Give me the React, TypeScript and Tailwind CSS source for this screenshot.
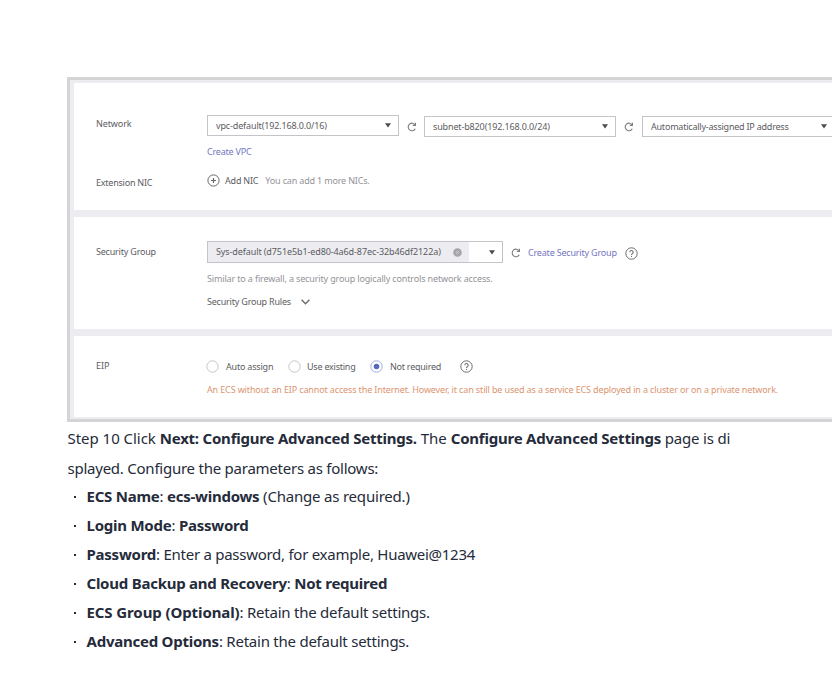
import type { ReactNode } from "react";

const Caret = () => (
  <svg className="h-[5px] w-[6px] shrink-0" viewBox="0 0 6 5">
    <path d="M0 .3h6L3 4.6z" fill="#4b4b50" />
  </svg>
);

const Refresh = () => (
  <svg className="h-[10px] w-[10px] shrink-0" viewBox="0 0 10 10" fill="none" stroke="#7c7c80" strokeWidth="1.1">
    <path d="M8.3 6.8A3.8 3.8 0 1 1 8.2 2.9" />
    <path d="M8.4 0.8V3.4H5.8" />
  </svg>
);

const Help = () => (
  <svg className="h-[13px] w-[13px] shrink-0" viewBox="0 0 13 13" fill="none" stroke="#6c6c70" strokeWidth="1">
    <circle cx="6.5" cy="6.5" r="5.7" />
    <path d="M4.8 5.2a1.7 1.7 0 1 1 2.5 1.5q-.8.4-.8 1.2" strokeWidth="1.1" />
    <path d="M6.5 8.9v1.1" strokeWidth="1.1" />
  </svg>
);

const Radio = ({ checked = false }: { checked?: boolean }) => (
  <svg className="h-[13px] w-[13px] shrink-0" viewBox="0 0 13 13" fill="none">
    <circle cx="6.5" cy="6.5" r="5.7" stroke={checked ? "#9dabe2" : "#c6c6ca"} />
    {checked && <circle cx="6.5" cy="6.5" r="2.8" fill="#5469c0" />}
  </svg>
);

const Select = ({ children, className }: { children: ReactNode; className: string }) => (
  <div className={`flex h-[21px] shrink-0 items-center justify-between border border-[#c3c3c8] pl-2 pr-[7px] ${className}`}>
    <span>{children}</span>
    <Caret />
  </div>
);

const Item = ({ children }: { children: ReactNode }) => (
  <li className="flex h-[29px] items-center">
    <span className="ml-[6px] mr-[11px] h-[2px] w-[2px] bg-[#252b3a]" />
    <span>{children}</span>
  </li>
);

export default function App() {
  return (
    <main className="h-[688px] w-[832px] overflow-hidden bg-white pl-[67px] pt-[77px] font-['Noto_Sans','Open_Sans',sans-serif] text-[#252b3a]">
      <section className="h-[345px] w-[765px] overflow-hidden border-b-[3px] border-l-[3px] border-t-[3px] border-[#d4d4d7] bg-[#ececf1] pl-1 pt-[3px] text-[9px] leading-[14px] tracking-[-0.2px] whitespace-nowrap text-[#5c5c62]">
        <div className="h-[127px] bg-white pl-[22px] pt-[32px]">
          <div className="flex">
            <span className="mt-[2px] w-[111px] shrink-0 tracking-[-0.1px]">Network</span>
            <div className="flex items-center">
              <Select className="mb-px w-[192px] tracking-[-0.14px]">vpc-default(192.168.0.0/16)</Select>
              <span className="ml-[8px] mr-[7px] mt-[2px]"><Refresh /></span>
              <Select className="mt-px w-[192px] tracking-[-0.14px]">subnet-b820(192.168.0.0/24)</Select>
              <span className="ml-[8px] mr-[8px] mt-px"><Refresh /></span>
              <Select className="mt-px w-[193px] tracking-[-0.22px]">Automatically-assigned IP address</Select>
            </div>
          </div>
          <div className="ml-[111px] mt-[8px] text-[#7476c2]">Create VPC</div>
          <div className="mt-[14px] flex">
            <span className="mt-[3px] w-[111px] tracking-[-0.23px]">Extension NIC</span>
            <svg className="mt-px h-[13px] w-[13px]" viewBox="0 0 13 13" fill="none" stroke="#68686c">
              <circle cx="6.5" cy="6.5" r="5.6" />
              <path d="M4 6.5h5M6.5 4v5" strokeWidth="1.2" />
            </svg>
            <span className="ml-[5px] mt-px">Add NIC</span>
            <span className="ml-[7px] mt-px tracking-[-0.17px] text-[#939397]">You can add 1 more NICs.</span>
          </div>
        </div>
        <div className="mt-[7px] h-[112px] bg-white pl-[22px] pt-[24px]">
          <div className="flex items-center">
            <span className="w-[111px]">Security Group</span>
            <div className="flex h-[22px] w-[296px] items-center justify-between border border-[#c3c3c8] pr-[7px]">
              <div className="flex h-5 w-[261px] items-center justify-between bg-[#ececf1] pl-2 pr-[7px]">
                <span className="tracking-[-0.1px]">Sys-default (d751e5b1-ed80-4a6d-87ec-32b46df2122a)</span>
                <svg className="h-[9px] w-[9px]" viewBox="0 0 9 9">
                  <circle cx="4.5" cy="4.5" r="4.3" fill="#a5a5aa" />
                  <path d="M3 3l3 3M6 3L3 6" stroke="#d4d4d7" strokeWidth=".8" />
                </svg>
              </div>
              <Caret />
            </div>
            <span className="ml-[8px] mt-[2px]"><Refresh /></span>
            <span className="ml-[7px] mt-px tracking-[-0.19px] text-[#7476c2]">Create Security Group</span>
            <span className="ml-2 mt-[2px]"><Help /></span>
          </div>
          <div className="ml-[111px] mt-[9px] tracking-[-0.145px] text-[#939397]">Similar to a firewall, a security group logically controls network access.</div>
          <div className="ml-[111px] mt-[9px] flex items-center">
            <span>Security Group Rules</span>
            <svg className="ml-[10px] h-[6px] w-[9px]" viewBox="0 0 9 6" fill="none" stroke="#68686c" strokeWidth="1.3">
              <path d="M.6.7l3.9 4L8.4.7" />
            </svg>
          </div>
        </div>
        <div className="mt-[7px] h-[81px] bg-white pl-[22px] pt-[23px]">
          <div className="flex">
            <span className="w-[110px] tracking-normal">EIP</span>
            <div className="flex h-[15px] items-center">
              <div className="flex w-[82px] items-center gap-[7px]"><Radio />Auto assign</div>
              <div className="flex w-[82px] items-center gap-[6px] tracking-[-0.23px]"><Radio />Use existing</div>
              <div className="flex w-[90px] items-center gap-[7px] tracking-[-0.25px]"><Radio checked />Not required</div>
              <Help />
            </div>
          </div>
          <div className="ml-[111px] mt-[9px] tracking-[-0.135px] text-[#dc9470]">An ECS without an EIP cannot access the Internet. However, it can still be used as a service ECS deployed in a cluster or on a private network.</div>
        </div>
      </section>
      <article className="pl-[0.5px] text-[15px] tracking-[-0.24px]">
        <p className="mt-px leading-[30px]">
          <span className="tracking-[-0.03px]">Step 10 Click </span>
          <b className="tracking-[-0.22px]">Next: Configure Advanced Settings.</b>
          <span className="tracking-normal"> The </span>
          <b className="tracking-[-0.22px]">Configure Advanced Settings</b>
          <span className="tracking-[-0.18px]"> page is di</span>
          <br />
          splayed. Configure the parameters as follows:
        </p>
        <ul className="-mt-px">
          <Item><b>ECS Name</b>: <b>ecs-windows</b><span className="tracking-[-0.2px]"> (Change as required.)</span></Item>
          <Item><b>Login Mode</b>: <b>Password</b></Item>
          <Item><b>Password</b>: <span className="tracking-[-0.27px]">Enter a password, for example, Huawei@1234</span></Item>
          <Item><b>Cloud Backup and Recovery</b>: <b>Not required</b></Item>
          <Item><b className="tracking-[-0.1px]">ECS Group (Optional)</b>: Retain the default settings.</Item>
          <Item><b>Advanced Options</b>: Retain the default settings.</Item>
        </ul>
      </article>
    </main>
  );
}
